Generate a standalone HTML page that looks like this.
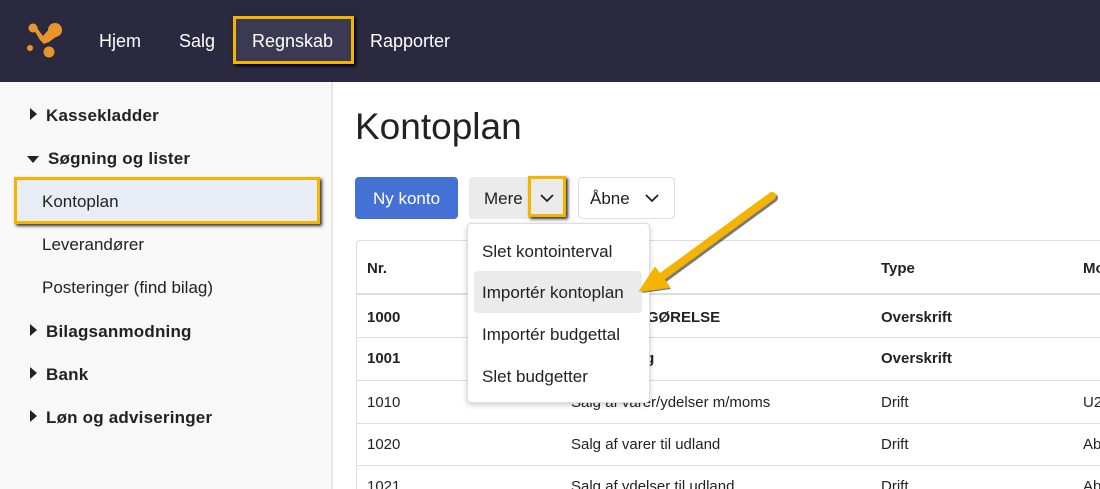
<!DOCTYPE html>
<html><head><meta charset="utf-8"><style>
*{box-sizing:border-box;margin:0;padding:0}
html,body{width:1100px;height:489px;overflow:hidden}
body{font-family:"Liberation Sans",sans-serif;background:#fff;position:relative;color:#222}
.hdr{position:absolute;left:0;top:0;width:1100px;height:82px;background:#2a2940}
.nav{position:absolute;top:31px;color:#fff;font-size:18px}
.side{position:absolute;left:0;top:82px;width:333px;height:407px;background:#f8f8f8;border-right:2px solid #e6e6e6}
.s{position:absolute;font-size:17px;color:#222}
.b{font-weight:bold}
.tri{display:inline-block;width:0;height:0;margin-right:9px;vertical-align:1px}
.tr{border-top:6px solid transparent;border-bottom:6px solid transparent;border-left:7px solid #222}
.td{border-left:6px solid transparent;border-right:6px solid transparent;border-top:7px solid #222}
.abs{position:absolute}
.t{position:absolute;font-size:15px}
.hl{position:absolute;left:356px;width:744px;height:1px;background:#ddd}
</style></head><body>
<div class="hdr">
<svg class="abs" style="left:24px;top:20px" width="42" height="42" viewBox="0 0 42 42">
<g fill="#e8962c"><circle cx="9" cy="8" r="4.5"/><circle cx="31" cy="10" r="7"/><circle cx="6" cy="28" r="3"/><circle cx="25" cy="32" r="5.5"/>
<path d="M7 5 L13 8 L19 16 L26 8 L36 14 L25 22 L20 24 L16 20 Z"/></g></svg>
<div class="nav" style="left:99px">Hjem</div>
<div class="nav" style="left:179px">Salg</div>
<div class="abs" style="left:233px;top:16px;width:121px;height:48px;background:#3b3a52;border:3px solid #f5b400;box-shadow:2px 2px 3px #000"></div>
<div class="nav" style="left:252px">Regnskab</div>
<div class="nav" style="left:370px">Rapporter</div>
</div>
<div class="side"></div>
<div class="s b" style="left:30px;top:106px;letter-spacing:.2px"><span class="tri tr"></span>Kassekladder</div>
<div class="s b" style="left:27px;top:149px;letter-spacing:.2px"><span class="tri td"></span>Søgning og lister</div>
<div class="abs" style="left:14px;top:177px;width:306px;height:47px;background:#e8ecf5;border:3px solid #f5b400;box-shadow:2px 2px 3px #333"></div>
<div class="s" style="left:42px;top:192px">Kontoplan</div>
<div class="s" style="left:42px;top:235px">Leverandører</div>
<div class="s" style="left:42px;top:278px">Posteringer (find bilag)</div>
<div class="s b" style="left:30px;top:322px;letter-spacing:.2px"><span class="tri tr"></span>Bilagsanmodning</div>
<div class="s b" style="left:30px;top:365px;letter-spacing:.2px"><span class="tri tr"></span>Bank</div>
<div class="s b" style="left:30px;top:408px;letter-spacing:.2px"><span class="tri tr"></span>Løn og adviseringer</div>

<div class="abs" style="left:355px;top:106px;font-size:37px;color:#222">Kontoplan</div>
<div class="abs" style="left:355px;top:177px;width:103px;height:42px;background:#4472d4;border-radius:4px;color:#fff;font-size:17px;line-height:43px;text-align:center">Ny konto</div>
<div class="abs" style="left:469px;top:177px;width:98px;height:42px;background:#ebebeb;border-radius:4px;font-size:17px;line-height:43px;padding-left:15px">Mere</div>
<div class="abs" style="left:528px;top:176px;width:38px;height:41px;border:3px solid #f5b400;box-shadow:2px 2px 3px #333"></div>
<svg class="abs" style="left:539px;top:192px" width="16" height="12"><path d="M2 3 L8 9 L14 3" stroke="#222" stroke-width="1.8" fill="none"/></svg>
<div class="abs" style="left:578px;top:177px;width:97px;height:42px;border:1px solid #ddd;border-radius:4px;font-size:17px;line-height:41px;padding-left:11px">Åbne</div>
<svg class="abs" style="left:644px;top:192px" width="16" height="12"><path d="M2 3 L8 9 L14 3" stroke="#222" stroke-width="1.8" fill="none"/></svg>

<div class="abs" style="left:356px;top:240px;width:760px;height:260px;border:1px solid #ddd;border-radius:4px"></div>
<div class="abs" style="left:356px;top:293px;width:744px;height:2px;background:#ddd"></div>
<div class="hl" style="top:337px"></div><div class="hl" style="top:380px"></div><div class="hl" style="top:423px"></div><div class="hl" style="top:465px"></div>
<div class="t b" style="left:367px;top:260px">Nr.</div>
<div class="t b" style="left:881px;top:260px">Type</div>
<div class="t b" style="left:1083px;top:260px">Mo</div>
<div class="t b" style="left:367px;top:309px">1000</div><div class="t b" style="left:571px;top:309px">DRIFTSOPGØRELSE</div><div class="t b" style="left:881px;top:309px">Overskrift</div>
<div class="t b" style="left:367px;top:350px">1001</div><div class="t b" style="left:571px;top:350px">Omsætning</div><div class="t b" style="left:881px;top:350px">Overskrift</div>
<div class="t" style="left:367px;top:394px">1010</div><div class="t" style="left:571px;top:394px">Salg af varer/ydelser m/moms</div><div class="t" style="left:881px;top:394px">Drift</div><div class="t" style="left:1083px;top:394px">U25</div>
<div class="t" style="left:367px;top:436px">1020</div><div class="t" style="left:571px;top:436px">Salg af varer til udland</div><div class="t" style="left:881px;top:436px">Drift</div><div class="t" style="left:1083px;top:436px">Ab</div>
<div class="t" style="left:367px;top:478px">1021</div><div class="t" style="left:571px;top:478px">Salg af ydelser til udland</div><div class="t" style="left:881px;top:478px">Drift</div><div class="t" style="left:1083px;top:478px">Ab</div>

<div class="abs" style="left:467px;top:223px;width:183px;height:180px;background:#fff;border:1px solid #ddd;border-radius:4px;box-shadow:0 2px 6px rgba(0,0,0,.2)"></div>
<div class="abs" style="left:474px;top:271px;width:168px;height:42px;background:#ebebeb;border-radius:4px"></div>
<div class="s" style="left:482px;top:242px">Slet kontointerval</div>
<div class="s" style="left:482px;top:283px">Importér kontoplan</div>
<div class="s" style="left:482px;top:325px">Importér budgettal</div>
<div class="s" style="left:482px;top:367px">Slet budgetter</div>

<svg class="abs" style="left:0;top:0" width="1100" height="489">
<g transform="translate(2,2)" opacity=".6"><path d="M772 196 L660 278" stroke="#222" stroke-width="8" stroke-linecap="round"/><path d="M640 291 L655 268 L669 287 Z" fill="#222"/></g>
<path d="M772 196 L660 278" stroke="#f5b400" stroke-width="8" stroke-linecap="round"/><path d="M640 291 L655 268 L669 287 Z" fill="#f5b400" stroke="#f5b400" stroke-width="2" stroke-linejoin="round"/>
</svg>
</body></html>
